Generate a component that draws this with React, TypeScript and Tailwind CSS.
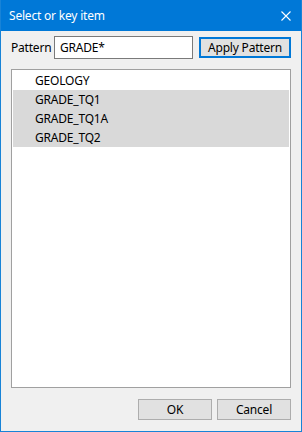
const ITEMS = [
  { name: 'GEOLOGY', selected: false },
  { name: 'GRADE_TQ1', selected: true },
  { name: 'GRADE_TQ1A', selected: true },
  { name: 'GRADE_TQ2', selected: true },
]

export default function App() {
  return (
    <div
      className="w-[302px] h-[432px] flex flex-col border border-t-0 border-[#1883d7] bg-[#f0f0f0] text-[12px] tracking-[-0.2px] text-black"
      style={{ fontFamily: '"Segoe UI", "Noto Sans", sans-serif' }}
    >
      {/* Titre */}
      <div className="h-[31px] shrink-0 bg-[#0078d7] flex items-center justify-between pl-[8px] pr-[10px] text-white">
        <span className="leading-none">Select or key item</span>
        <svg width="10" height="10" viewBox="0 0 10 10">
          <path d="M0.5 0.5 L9.5 9.5 M9.5 0.5 L0.5 9.5" stroke="white" strokeWidth="1.1" />
        </svg>
      </div>

      {/* Motif */}
      <div className="flex items-center mt-[5px] pl-[10px] h-[23px]">
        <span className="w-[43px]">Pattern</span>
        <div className="w-[139px] h-[23px] border border-[#7a7a7a] bg-white flex items-center px-[5px]">
          GRADE*
        </div>
        <button className="ml-[6px] w-[92px] h-[21px] border-2 border-[#0078d7] bg-[#e1e1e1] flex items-center justify-center">
          Apply Pattern
        </button>
      </div>

      {/* Liste */}
      <div className="mt-[10px] ml-[10px] w-[280px] h-[319px] border border-[#a0a0a0] bg-white p-[1px]">
        {ITEMS.map((it) => (
          <div
            key={it.name}
            className={`h-[19px] flex items-center pl-[22px] ${it.selected ? 'bg-[#d9d9d9]' : ''}`}
          >
            {it.name}
          </div>
        ))}
      </div>

      {/* Boutons */}
      <div className="flex justify-end gap-[5px] mt-[11px] pr-[10px]">
        <button className="w-[74px] h-[21px] border border-[#adadad] bg-[#e1e1e1]">OK</button>
        <button className="w-[74px] h-[21px] border border-[#adadad] bg-[#e1e1e1]">Cancel</button>
      </div>
    </div>
  )
}
